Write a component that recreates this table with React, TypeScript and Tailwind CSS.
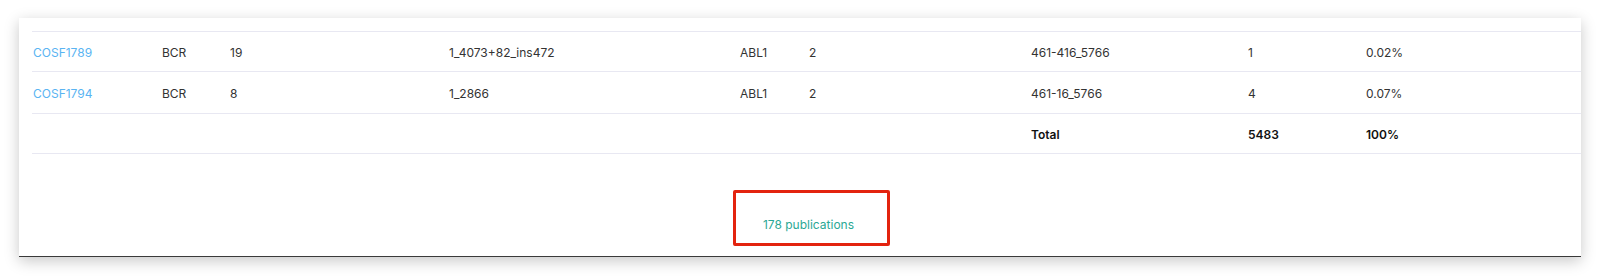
import React from "react";

const cols =
  "grid grid-cols-[129px_68px_219px_291px_69px_222px_217px_118px_1fr] items-center";

type Row = {
  id: string;
  g1: string;
  n1: string;
  bp: string;
  g2: string;
  n2: string;
  bp2: string;
  count: string;
  pct: string;
};

const rows: Row[] = [
  {
    id: "COSF1789",
    g1: "BCR",
    n1: "19",
    bp: "1_4073+82_ins472",
    g2: "ABL1",
    n2: "2",
    bp2: "461-416_5766",
    count: "1",
    pct: "0.02%",
  },
  {
    id: "COSF1794",
    g1: "BCR",
    n1: "8",
    bp: "1_2866",
    g2: "ABL1",
    n2: "2",
    bp2: "461-16_5766",
    count: "4",
    pct: "0.07%",
  },
];

export default function App() {
  return (
    <div
      className="w-[1600px] h-[276px] bg-white pt-[18px] pl-[19px] overflow-hidden"
      style={{ fontFamily: "Inter, 'Noto Sans', sans-serif" }}
    >
      <div className="w-[1562px] h-[239px] bg-white border-b border-[#3a3a3a] shadow-[0_4px_14px_rgba(0,0,0,0.22)] pl-[13px] pt-[13px] flex flex-col">
        <div className="border-t border-[#e8e8f2] text-[12px] text-[#333]">
          {rows.map((r, i) => (
            <div
              key={r.id}
              className={`${cols} pl-[1px] pt-[3px] border-b border-[#e8e8f2] ${
                i === 0 ? "h-[40px]" : "h-[42px]"
              }`}
            >
              <a className="text-[#5ab4f2]">{r.id}</a>
              <span>{r.g1}</span>
              <span>{r.n1}</span>
              <span>{r.bp}</span>
              <span>{r.g2}</span>
              <span>{r.n2}</span>
              <span>{r.bp2}</span>
              <span>{r.count}</span>
              <span>{r.pct}</span>
            </div>
          ))}
          <div
            className={`${cols} pl-[1px] pt-[3px] h-[40px] border-b border-[#e8e8f2] font-semibold text-[#111]`}
          >
            <span />
            <span />
            <span />
            <span />
            <span />
            <span />
            <span>Total</span>
            <span>5483</span>
            <span>100%</span>
          </div>
        </div>
        <div className="flex justify-center pt-[36px] pl-[10px]">
          <div className="w-[157px] h-[56px] border-[3px] border-[#e3230f] rounded-[2px] flex items-end justify-center pb-[9px] pr-[6px]">
            <span className="text-[12px] text-[#2ba895]">178 publications</span>
          </div>
        </div>
      </div>
    </div>
  );
}
